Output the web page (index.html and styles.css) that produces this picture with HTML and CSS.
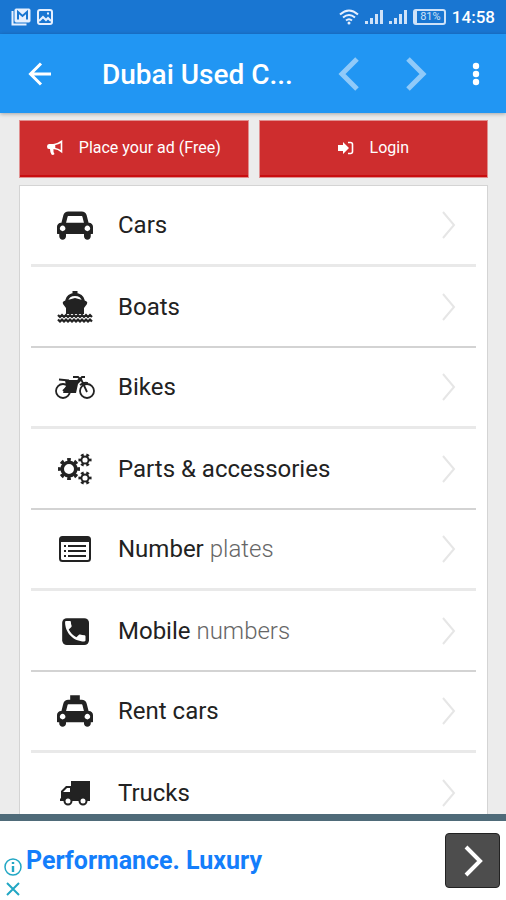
FILE: index.html
```html
<!DOCTYPE html>
<html lang="en">
<head>
  <meta charset="UTF-8" />
  <meta name="viewport" content="width=device-width, initial-scale=1.0"/>
  <title>Dubai Used Cars</title>
  <link rel="stylesheet" href="styles.css">
</head>
<body>
  <!-- Status bar -->
  <div class="status-bar">
    <svg width="20" height="18" viewBox="0 0 20 18" fill="none" stroke="#e6f0ff">
      <path d="M1.500 3v13.500h14" stroke-width="2"/>
      <rect x="4" y="1" width="15" height="13" rx="1" fill="#e6f0ff"/>
      <path d="M7 11.500V4l4.500 4L16 4v7.500" stroke="#1976d2" stroke-width="2"/>
    </svg>
    <svg width="16" height="16" viewBox="0 0 16 16" fill="none" stroke="#e6f0ff" stroke-width="2">
      <rect x="1" y="1" width="14" height="14" rx="2"/>
      <path d="M2 12l4-4 3 3 2-2 3 3M10 4.500h2"/>
    </svg>
    <div class="status-right">
      <svg width="20" height="16" viewBox="0 0 20 16" fill="none" stroke="#e6f0ff" stroke-width="2">
        <path d="M1 5.500q9-8 18 0M4 8.500q6-5 12 0M7 11.500q3-2.500 6 0"/>
        <circle cx="10" cy="14" r="1.500" fill="#e6f0ff" stroke="none"/>
      </svg>
      <svg width="18" height="16" viewBox="0 0 18 16" fill="#cfe2f8">
        <path d="M0 12h3v3H0zM5 9h3v6H5zM10 5h3v10h-3zM15 1h3v14h-3z"/>
      </svg>
      <svg width="18" height="16" viewBox="0 0 18 16" fill="#cfe2f8">
        <path d="M0 12h3v3H0zM5 9h3v6H5zM10 5h3v10h-3zM15 1h3v14h-3z"/>
      </svg>
      <span class="battery">81%</span>
      <span class="clock">14:58</span>
    </div>
  </div>

  <header class="app-bar">
    <button class="icon-btn" aria-label="Back">
      <svg width="24" height="24" viewBox="0 0 24 24" fill="none" stroke="#fff" stroke-width="3">
        <path d="M23 12H3M13 1.500L2.500 12 13 22.500"/>
      </svg>
    </button>
    <h1 class="title">Dubai Used C...</h1>
    <button class="icon-btn nav-btn" aria-label="Previous">
      <svg width="22" height="34" viewBox="0 0 22 34" fill="none" stroke="#90caf9" stroke-width="5">
        <path d="M19 2L4 17l15 15"/>
      </svg>
    </button>
    <button class="icon-btn nav-btn" aria-label="Next">
      <svg width="22" height="34" viewBox="0 0 22 34" fill="none" stroke="#90caf9" stroke-width="5">
        <path d="M3 2l15 15L3 32"/>
      </svg>
    </button>
    <button class="icon-btn" aria-label="More options">
      <svg width="8" height="24" viewBox="0 0 8 24" fill="#fff">
        <circle cx="4" cy="4" r="3.200"/><circle cx="4" cy="12" r="3.200"/><circle cx="4" cy="20" r="3.200"/>
      </svg>
    </button>
  </header>

  <main>
    <div class="actions">
      <button class="action">
        <svg width="16" height="16" viewBox="0 0 16 16">
          <path d="M14.500 1.500v10Q11 8.800 7.500 8.500v-4Q11 4.200 14.500 1.500z" fill="none" stroke="#fff" stroke-width="1.600"/>
          <path d="M8 4H2Q0 4 0 6.500T2 9h1q0 3 1.500 5.500Q6 15.500 7.500 14 6 12 6.500 9H8z" fill="#fff"/>
        </svg>
        Place your ad (Free)
      </button>
      <button class="action">
        <svg width="16" height="16" viewBox="0 0 16 16">
          <path d="M0 5h5V2l6 6-6 6v-3H0z" fill="#fff"/>
          <path d="M10 2.500h2.500q2 0 2 2v7q0 2-2 2H10" fill="none" stroke="#fff" stroke-width="1.600"/>
        </svg>
        Login
      </button>
    </div>

    <ul class="category-list">
      <li>
        <a href="#cars">
          <span class="icon">
            <svg width="36" height="32" viewBox="0 0 2048 1792">
              <path d="M480 1088q0-66-47-113t-113-47-113 47-47 113 47 113 113 47 113-47 47-113zm36-320h1016l-89-357q-2-8-14-17.500t-21-9.500h-768q-9 0-21 9.500t-14 17.500zm1372 320q0-66-47-113t-113-47-113 47-47 113 47 113 113 47 113-47 47-113zm160-96v384q0 14-9 23t-23 9h-96v128q0 80-56 136t-136 56-136-56-56-136v-128h-1024v128q0 80-56 136t-136 56-136-56-56-136v-128h-96q-14 0-23-9t-9-23v-384q0-93 65.500-158.500t158.500-65.500h28l105-419q23-94 104-157.500t179-63.500h768q98 0 179 63.500t104 157.500l105 419h28q93 0 158.500 65.500t65.500 158.500z"/>
            </svg>
          </span>
          <span class="label">Cars</span>
          <svg class="chevron" viewBox="0 0 14 28"><path d="M1 1l11 13L1 27"/></svg>
        </a>
      </li>
      <li>
        <a href="#boats">
          <span class="icon">
            <svg width="36" height="32" viewBox="0 0 36 32">
              <path d="M9.500 10Q11 3.500 18 3.500T26.500 10" fill="none" stroke="#222" stroke-width="3"/>
              <path d="M15.500 0h5v4h-5zM18 7l11 3q2 1 1 3l-3 4v6H9v-6l-3-4q-1-2 1-3z"/>
              <path d="M1 24l2 2 2-2 2 2 2-2 2 2 2-2 2 2 2-2 2 2 2-2 2 2 2-2 2 2 2-2 2 2 2-2 2 2M1 28.500l2 2 2-2 2 2 2-2 2 2 2-2 2 2 2-2 2 2 2-2 2 2 2-2 2 2 2-2 2 2 2-2 2 2" fill="none" stroke="#222" stroke-width="2.200"/>
            </svg>
          </span>
          <span class="label">Boats</span>
          <svg class="chevron" viewBox="0 0 14 28"><path d="M1 1l11 13L1 27"/></svg>
        </a>
      </li>
      <li>
        <a href="#bikes">
          <span class="icon">
            <svg width="40" height="24" viewBox="0 0 40 24">
              <g fill="none" stroke="#222" stroke-width="1.800">
                <circle cx="8" cy="16" r="7"/>
                <circle cx="32" cy="16" r="7"/>
                <path d="M4 4.500l10 1M18 2h5l3 3M24 6l3-4h3M26 4l6 13M8 16l5-5M25 10q4-3 8-2"/>
              </g>
              <path d="M10 5h12l4-3 1 3-4 4-2 9H8l3-7z"/>
            </svg>
          </span>
          <span class="label">Bikes</span>
          <svg class="chevron" viewBox="0 0 14 28"><path d="M1 1l11 13L1 27"/></svg>
        </a>
      </li>
      <li>
        <a href="#parts">
          <span class="icon">
            <svg width="34" height="32" viewBox="0 0 34 32" fill="none" stroke="#222">
              <circle cx="11" cy="16" r="6.800" stroke-width="3.600"/>
              <circle cx="11" cy="16" r="9.400" stroke-width="3.200" pathLength="16" stroke-dasharray="1 1" stroke-dashoffset=".5"/>
              <circle cx="27" cy="7" r="3.600" stroke-width="2"/>
              <circle cx="27" cy="7" r="5.200" stroke-width="2.800" pathLength="12" stroke-dasharray="1 1" stroke-dashoffset=".5"/>
              <circle cx="27" cy="25" r="3.600" stroke-width="2"/>
              <circle cx="27" cy="25" r="5.200" stroke-width="2.800" pathLength="12" stroke-dasharray="1 1" stroke-dashoffset=".5"/>
            </svg>
          </span>
          <span class="label">Parts &amp; accessories</span>
          <svg class="chevron" viewBox="0 0 14 28"><path d="M1 1l11 13L1 27"/></svg>
        </a>
      </li>
      <li>
        <a href="#plates">
          <span class="icon">
            <svg width="32" height="26" viewBox="0 0 32 26">
              <rect x="1" y="1" width="30" height="24" rx="2.500" fill="none" stroke="#222" stroke-width="2"/>
              <path d="M1 1h30v5H1zM5 9h2v2H5zM9 9h18v2H9zM5 14h2v2H5zM9 14h18v2H9zM5 19h2v2H5zM9 19h18v2H9z"/>
            </svg>
          </span>
          <span class="label">Number <span class="light">plates</span></span>
          <svg class="chevron" viewBox="0 0 14 28"><path d="M1 1l11 13L1 27"/></svg>
        </a>
      </li>
      <li>
        <a href="#mobile">
          <span class="icon">
            <svg width="28" height="28" viewBox="0 0 24 24">
              <rect x="1" y="1" width="23" height="23" rx="4"/>
              <path d="M6.600 10.800c1.400 2.800 3.800 5.100 6.600 6.600l2.200-2.200c.3-.3.7-.4 1-.2 1.100.4 2.300.6 3.600.6.6 0 1 .4 1 1V20c0 .6-.4 1-1 1C10.600 21 3.500 13.400 3.500 4.500c0-.6.4-1 1-1H7.500c.6 0 1 .4 1 1 0 1.200.2 2 .6 3 .1.300 0 .7-.2 1z" fill="#fff"/>
            </svg>
          </span>
          <span class="label">Mobile <span class="light">numbers</span></span>
          <svg class="chevron" viewBox="0 0 14 28"><path d="M1 1l11 13L1 27"/></svg>
        </a>
      </li>
      <li>
        <a href="#rent">
          <span class="icon">
            <svg width="36" height="32" viewBox="0 0 2048 1792">
              <path d="M750 0h548v270H750z"/>
              <path d="M480 1216q0-66-47-113t-113-47-113 47-47 113 47 113 113 47 113-47 47-113zm36-320h1016l-89-357q-2-8-14-17.500t-21-9.500h-768q-9 0-21 9.500t-14 17.500zm1372 320q0-66-47-113t-113-47-113 47-47 113 47 113 113 47 113-47 47-113zm160-96v384q0 14-9 23t-23 9h-96v64q0 80-56 136t-136 56-136-56-56-136v-64h-1024v64q0 80-56 136t-136 56-136-56-56-136v-64h-96q-14 0-23-9t-9-23v-384q0-93 65.500-158.500t158.500-65.500h28l105-419q23-94 104-157.500t179-63.500h768q98 0 179 63.500t104 157.500l105 419h28q93 0 158.500 65.500t65.500 158.500z"/>
            </svg>
          </span>
          <span class="label">Rent cars</span>
          <svg class="chevron" viewBox="0 0 14 28"><path d="M1 1l11 13L1 27"/></svg>
        </a>
      </li>
      <li>
        <a href="#trucks">
          <span class="icon">
            <svg width="30" height="26" viewBox="0 0 30 26">
              <path fill-rule="evenodd" d="M11 1h19v20H0v-2l1-1v-7l5-5h5zM10 8H7l-4 4h7z"/>
              <circle cx="8" cy="21" r="3.500" fill="#fff" stroke="#222" stroke-width="2"/>
              <circle cx="23" cy="21" r="3.500" fill="#fff" stroke="#222" stroke-width="2"/>
            </svg>
          </span>
          <span class="label">Trucks</span>
          <svg class="chevron" viewBox="0 0 14 28"><path d="M1 1l11 13L1 27"/></svg>
        </a>
      </li>
    </ul>
  </main>

  <!-- Ad banner -->
  <aside class="ad">
    <div class="ad-choices">
      <svg width="18" height="18" viewBox="0 0 18 18" fill="none" stroke="#22a7c4">
        <circle cx="9" cy="9" r="8" stroke-width="1.500"/>
        <path d="M9 4v2M9 8v6" stroke-width="2.400"/>
      </svg>
      <svg width="14" height="14" viewBox="0 0 14 14" fill="none" stroke="#22a7c4" stroke-width="2">
        <path d="M1 1l12 12M13 1L1 13"/>
      </svg>
    </div>
    <a class="ad-title" href="#ad">Performance. Luxury</a>
    <button class="ad-btn" aria-label="Open">
      <svg width="20" height="32" viewBox="0 0 20 32" fill="none" stroke="#fff" stroke-width="4">
        <path d="M3 2l14 14L3 30"/>
      </svg>
    </button>
  </aside>
</body>
</html>
```
FILE: styles.css
```css
* {
  box-sizing: border-box;
}

body {
  display: flex;
  flex-direction: column;
  height: 100vh;
  margin: 0;
  font-family: Roboto, sans-serif;
  background-color: #ececec;
}

svg {
  display: block;
  flex: none;
}

button {
  padding: 0;
  border: none;
  font-family: inherit;
  cursor: pointer;
}

.status-bar {
  display: flex;
  align-items: center;
  gap: 6px;
  flex: none;
  height: 34px;
  padding: 0 11px;
  background-color: #1976d2;
  color: #fff;
}

.status-right {
  display: flex;
  align-items: center;
  gap: 6px;
  margin-left: auto;
}

.battery {
  width: 33px;
  border: 2px solid #cfe2f8;
  border-left-width: 4px;
  border-radius: 3px;
  font-size: 11px;
  line-height: 12px;
  text-align: center;
  color: #cfe2f8;
}

.clock {
  font-size: 17px;
  font-weight: 500;
}

.app-bar {
  display: flex;
  align-items: center;
  flex: none;
  height: 79px;
  padding: 0 26px 0 28px;
  background-color: #2196f3;
  box-shadow: 0 1px 4px rgba(0, 0, 0, 0.3);
}

.icon-btn {
  background: none;
}

.title {
  flex: 1;
  margin: 0 0 0 50px;
  padding-top: 2px;
  font-size: 28px;
  font-weight: 500;
  color: #fff;
  white-space: nowrap;
}

.nav-btn {
  margin-right: 45px;
}

main {
  flex: 1;
  min-height: 0;
  padding: 7px 18px 0 19px;
  overflow: hidden;
}

.actions {
  display: grid;
  grid-template-columns: 1fr 1fr;
  gap: 10px;
  margin-bottom: 7px;
}

.action {
  display: flex;
  align-items: center;
  justify-content: center;
  gap: 16px;
  height: 58px;
  padding-bottom: 3px;
  border: 1px solid #e09090;
  font-size: 16px;
  color: #fff;
  background-color: #ce2d2e;
  box-shadow: inset 0 -2px 0 #c90d0f;
}

.category-list {
  margin: 0;
  padding: 0 11px;
  list-style: none;
  border: 1px solid #d4d4d4;
  background-color: #fff;
}

.category-list li {
  height: 81px;
  border-bottom: 3px solid #e9e9e9;
}

.category-list li:nth-child(even) {
  border-bottom: 2px solid #d3d3d3;
}

.category-list a {
  display: flex;
  align-items: center;
  height: 100%;
  padding-right: 20px;
  color: #222;
  text-decoration: none;
}

.icon {
  display: flex;
  justify-content: center;
  width: 87px;
  fill: #222;
}

.label {
  flex: 1;
  font-size: 24px;
}

.light {
  font-weight: 300;
  color: #666;
}

.chevron {
  width: 14px;
  height: 28px;
  fill: none;
  stroke: #e6e6e6;
  stroke-width: 2;
}

.ad {
  display: flex;
  align-items: center;
  flex: none;
  height: 86px;
  padding: 0 6px 0 4px;
  border-top: 7px solid #4f6b79;
  background-color: #fff;
}

.ad-choices {
  display: flex;
  flex-direction: column;
  align-items: center;
  align-self: flex-end;
  gap: 6px;
  width: 18px;
  padding-bottom: 4px;
}

.ad-title {
  flex: 1;
  margin-left: 4px;
  font-size: 25px;
  font-weight: 700;
  color: #147efb;
  text-decoration: none;
}

.ad-btn {
  display: flex;
  align-items: center;
  justify-content: center;
  width: 55px;
  height: 55px;
  border: 1px solid #222;
  border-radius: 4px;
  background-color: #4d4d4d;
}
```
